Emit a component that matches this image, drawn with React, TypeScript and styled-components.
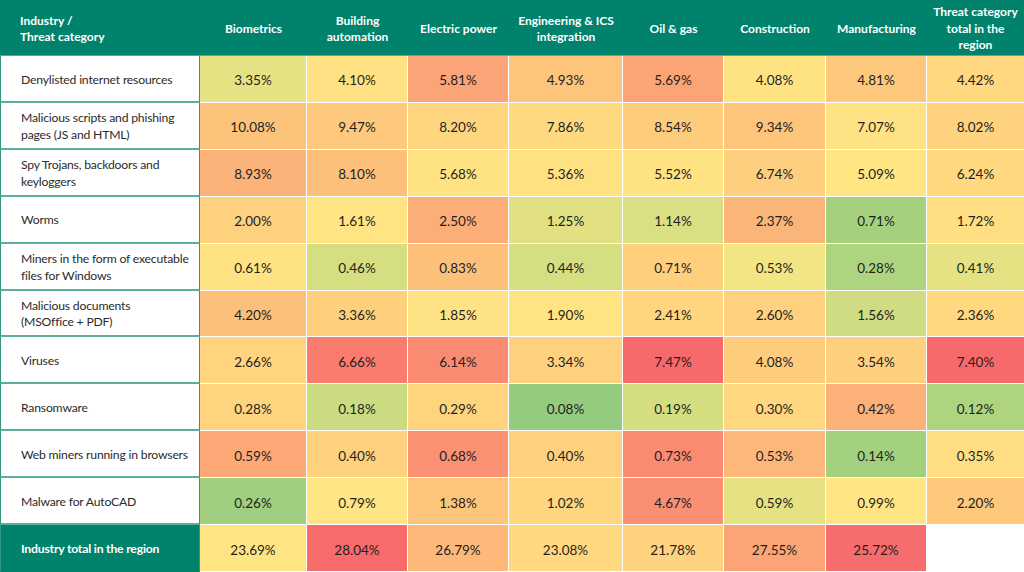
import * as React from 'react';
import styled, { createGlobalStyle } from 'styled-components';

const GlobalStyle = createGlobalStyle`
  html, body {
    margin: 0;
    padding: 0;
    background: #ffffff;
  }
  body {
    font-family: Lato, "Open Sans", "Noto Sans", sans-serif;
  }
`;

const TEAL = '#00826c';

const Table = styled.div`
  width: 1024px;
  height: 572px;
  display: grid;
  grid-template-columns: 200px 107px 101px 101px 114px 101px 102px 101px 1fr;
  grid-template-rows: 56px repeat(11, 1fr);
  background: #ffffff;
  overflow: hidden;
`;

const HeadCell = styled.div<{ $left?: boolean }>`
  background: ${TEAL};
  color: #ffffff;
  font-size: 12px;
  font-weight: 700;
  line-height: 16.5px;
  display: flex;
  align-items: center;
  justify-content: ${p => (p.$left ? 'flex-start' : 'center')};
  text-align: ${p => (p.$left ? 'left' : 'center')};
  padding: ${p => (p.$left ? '3px 0 0 20px' : '3px 4px 0')};
  border-bottom: 1px solid #4fa897;
`;

const LabelCell = styled.div<{ $total?: boolean }>`
  background: ${p => (p.$total ? TEAL : '#ffffff')};
  color: ${p => (p.$total ? '#ffffff' : '#2b2b2b')};
  font-size: 12.2px;
  letter-spacing: -0.2px;
  font-weight: ${p => (p.$total ? 700 : 400)};
  line-height: 16.5px;
  white-space: pre-line;
  display: flex;
  align-items: center;
  padding: 3px 0 0 20px;
  border-left: 1px solid #2f9682;
  border-right: 1px solid #2f9682;
  border-bottom: 2px solid ${p => (p.$total ? TEAL : '#5aaf9e')};
`;

const ValueCell = styled.div<{ $bg: string }>`
  background: ${p => p.$bg};
  color: #1f1f1f;
  font-size: 13.5px;
  display: flex;
  align-items: center;
  justify-content: center;
  padding-top: 3px;
  border-right: 1px solid #ffffff;
  border-bottom: 1px solid #ffffff;

  &:nth-child(9n) {
    border-right: none;
  }
`;

const headers = [
  'Biometrics',
  'Building automation',
  'Electric power',
  'Engineering & ICS integration',
  'Oil & gas',
  'Construction',
  'Manufacturing',
  'Threat category total in the region',
];

type Row = { label: string; cells: [string, string][] };

const rows: Row[] = [
  {
    label: 'Denylisted internet resources',
    cells: [
      ['3.35%', '#e5e283'], ['4.10%', '#ffe183'], ['5.81%', '#fba477'], ['4.93%', '#fdc47c'],
      ['5.69%', '#fba577'], ['4.08%', '#ffe383'], ['4.81%', '#fec87c'], ['4.42%', '#ffd880'],
    ],
  },
  {
    label: 'Malicious scripts and phishing\npages (JS and HTML)',
    cells: [
      ['10.08%', '#fcc37b'], ['9.47%', '#fec97d'], ['8.20%', '#ffd680'], ['7.86%', '#ffd980'],
      ['8.54%', '#fecc7d'], ['9.34%', '#fdc47c'], ['7.07%', '#ffe283'], ['8.02%', '#ffd27f'],
    ],
  },
  {
    label: 'Spy Trojans, backdoors and\nkeyloggers',
    cells: [
      ['8.93%', '#fbb379'], ['8.10%', '#fcc07b'], ['5.68%', '#ffe383'], ['5.36%', '#ffe182'],
      ['5.52%', '#ffe383'], ['6.74%', '#fecf7e'], ['5.09%', '#ffe683'], ['6.24%', '#ffd880'],
    ],
  },
  {
    label: 'Worms',
    cells: [
      ['2.00%', '#fed17e'], ['1.61%', '#ffe483'], ['2.50%', '#fcae78'], ['1.25%', '#e1e183'],
      ['1.14%', '#d9df82'], ['2.37%', '#fcb579'], ['0.71%', '#a5d17f'], ['1.72%', '#ffdf82'],
    ],
  },
  {
    label: 'Miners in the form of executable\nfiles for Windows',
    cells: [
      ['0.61%', '#ffe383'], ['0.46%', '#d5de81'], ['0.83%', '#fcc07b'], ['0.44%', '#d5de81'],
      ['0.71%', '#fed07e'], ['0.53%', '#f2e684'], ['0.28%', '#aed480'], ['0.41%', '#e5e283'],
    ],
  },
  {
    label: 'Malicious documents\n(MSOffice + PDF)',
    cells: [
      ['4.20%', '#fcbf7b'], ['3.36%', '#fed07e'], ['1.85%', '#ffe283'], ['1.90%', '#ffe483'],
      ['2.41%', '#ffd580'], ['2.60%', '#ffd07e'], ['1.56%', '#cfdc81'], ['2.36%', '#ffd880'],
    ],
  },
  {
    label: 'Viruses',
    cells: [
      ['2.66%', '#fed47f'], ['6.66%', '#f97c6f'], ['6.14%', '#fa8b72'], ['3.34%', '#ffd17e'],
      ['7.47%', '#f8696b'], ['4.08%', '#fecc7d'], ['3.54%', '#fed07e'], ['7.40%', '#f8696b'],
    ],
  },
  {
    label: 'Ransomware',
    cells: [
      ['0.28%', '#fed47f'], ['0.18%', '#cadb81'], ['0.29%', '#fed47f'], ['0.08%', '#95cb7e'],
      ['0.19%', '#d4de81'], ['0.30%', '#ffd780'], ['0.42%', '#fcb179'], ['0.12%', '#afd480'],
    ],
  },
  {
    label: 'Web miners running in browsers',
    cells: [
      ['0.59%', '#fca877'], ['0.40%', '#fed17e'], ['0.68%', '#fa9173'], ['0.40%', '#ffd17e'],
      ['0.73%', '#fa8a72'], ['0.53%', '#fdb77a'], ['0.14%', '#a2d07f'], ['0.35%', '#ffdd82'],
    ],
  },
  {
    label: 'Malware for AutoCAD',
    cells: [
      ['0.26%', '#9fcf7f'], ['0.79%', '#ffe583'], ['1.38%', '#fdc57c'], ['1.02%', '#ffd680'],
      ['4.67%', '#fa8f73'], ['0.59%', '#e6e283'], ['0.99%', '#ffe583'], ['2.20%', '#fec97d'],
    ],
  },
];

const totals: [string, string][] = [
  ['23.69%', '#ffe483'], ['28.04%', '#f86b6b'], ['26.79%', '#fdb87a'], ['23.08%', '#ffd880'],
  ['21.78%', '#fed27f'], ['27.55%', '#fba577'], ['25.72%', '#f76c6d'], ['', '#ffffff'],
];

export default function App() {
  return (
    <>
      <GlobalStyle />
      <Table>
        <HeadCell $left>
          Industry /
          <br />
          Threat category
        </HeadCell>
        {headers.map(h => (
          <HeadCell key={h}>{h}</HeadCell>
        ))}
        {rows.map(row => (
          <React.Fragment key={row.label}>
            <LabelCell>{row.label}</LabelCell>
            {row.cells.map(([v, c], i) => (
              <ValueCell key={i} $bg={c}>{v}</ValueCell>
            ))}
          </React.Fragment>
        ))}
        <LabelCell $total>Industry total in the region</LabelCell>
        {totals.map(([v, c], i) => (
          <ValueCell key={i} $bg={c}>{v}</ValueCell>
        ))}
      </Table>
    </>
  );
}
